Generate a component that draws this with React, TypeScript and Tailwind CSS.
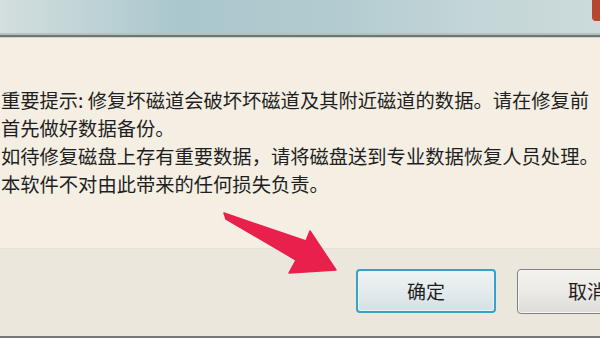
import React from "react";

export default function App() {
  const font = { fontFamily: '"Noto Sans CJK SC", "Noto Sans", sans-serif' };
  return (
    <div
      className="relative w-[600px] h-[338px] overflow-hidden flex flex-col bg-[#f4eee3]"
      style={font}
    >
      {/* title bar */}
      <div className="h-[33px] shrink-0 flex justify-end bg-[linear-gradient(90deg,#d4dfde_0%,#aac7cd_30%,#b2cbd0_55%,#c4d6d8_80%,#ccdadb_100%)]">
        <div className="w-[8px] h-[21px] rounded-bl-[4px] bg-[#b5472c]" />
      </div>
      <div className="h-[2px] shrink-0 bg-[#b6c0bf]" />
      <div className="h-[2px] shrink-0 bg-[#6d7673]" />
      <div className="h-[1px] shrink-0 bg-[#cfd2c9]" />

      {/* message */}
      <div className="flex-1 pt-[48px] pl-[1px] text-[19.3px] leading-[28px] text-[#1f1f1f] whitespace-nowrap">
        <div>重要提示: 修复坏磁道会破坏坏磁道及其附近磁道的数据。请在修复前</div>
        <div>首先做好数据备份。</div>
        <div>如待修复磁盘上存有重要数据，请将磁盘送到专业数据恢复人员处理。</div>
        <div>本软件不对由此带来的任何损失负责。</div>
      </div>

      {/* footer */}
      <div className="h-[88px] shrink-0 bg-[#ece7dc] border-t border-[#e7e1d5] pt-[20px] pl-[356px] flex gap-[21px]">
        <div className="w-[140px] h-[44px] shrink-0 rounded-[4px] border-2 border-[#37a2c6] shadow-[inset_0_0_0_1px_#e9f5f8] bg-[linear-gradient(180deg,#eef3f3_0%,#e6eced_45%,#d4e0e4_100%)] flex items-center justify-center text-[19px] text-[#1e1e1e]">
          确定
        </div>
        <div className="w-[140px] h-[45px] shrink-0 rounded-[4px] border border-[#7f8283] shadow-[inset_0_0_0_1px_#f7f6f3] bg-[linear-gradient(180deg,#f3f2ef_0%,#ebeae6_50%,#dedcd8_100%)] flex items-center justify-center text-[19px] text-[#1e1e1e]">
          取消
        </div>
      </div>
      <div className="h-[2px] shrink-0 bg-[#747a79]" />

      {/* arrow annotation */}
      <svg
        className="absolute left-0 top-0 pointer-events-none"
        width="600"
        height="338"
        viewBox="0 0 600 338"
      >
        <polygon
          points="224,213 306,241 310,231 336,270 289,273 296,260 226,219"
          fill="#e8204b"
          stroke="#e8204b"
          strokeWidth="1.5"
          strokeLinejoin="round"
        />
      </svg>
    </div>
  );
}
